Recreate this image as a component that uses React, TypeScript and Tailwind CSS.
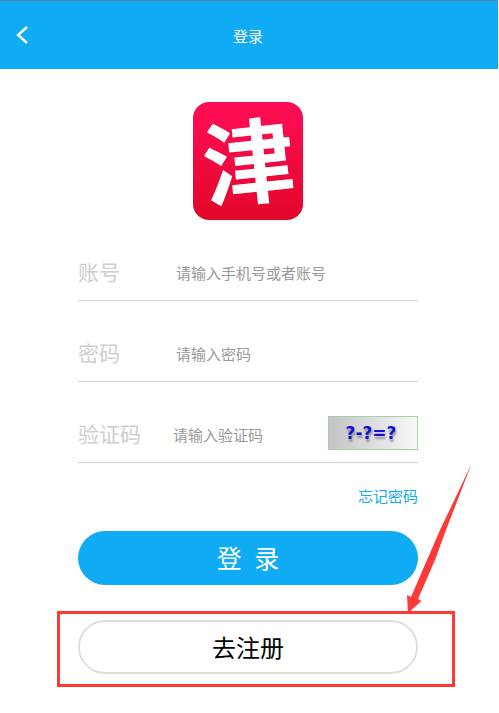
import React from 'react';

type FieldProps = {
    id: string;
    label: string;
    labelWidth: string;
    type: string;
    placeholder: string;
    children?: React.ReactNode;
}

function Field( props: FieldProps ) {

    return (
        <div className="flex items-end h-[81px] pb-3 border-b border-[#d0d0d0]">
            <label htmlFor={props.id} className={`${props.labelWidth} shrink-0 pb-px text-[21px] leading-8 text-[#cecece]`}>{props.label}</label>
            <input
                id={props.id}
                type={props.type}
                placeholder={props.placeholder}
                className="min-w-0 flex-1 h-[30px] pb-0.5 text-[15px] outline-none placeholder:text-[#999999]"
            />
            {props.children}
        </div>
    );
}

function Logo() {

    return (
        <div className="flex items-center justify-center w-[110px] h-[118px] pb-2 rounded-2xl bg-linear-to-b from-[#ff0c55] to-[#e30628]">
            <span className="-rotate-6 text-[92px] leading-[110px] font-bold text-white">津</span>
        </div>
    );
}

function Captcha() {

    return (
        <button
            type="button"
            aria-label="换一张验证码"
            className="flex items-start justify-center w-[90px] h-[34px] shrink-0 border border-[#a9cfa6] bg-linear-to-r from-[#c4c4c4] to-[#f8f8f8]"
        >
            <span className="pt-1 pr-1 font-['DejaVu_Sans',sans-serif] text-[17px] leading-6 font-bold text-[#1010d8] text-shadow-[1px_3px_2px_#66666699]">?-?=?</span>
        </button>
    );
}

function App() {

    return (
        <div className="pr-px pb-6 bg-white font-['Noto_Sans_CJK_SC',sans-serif]">
            <header className="grid grid-cols-[48px_1fr_48px] items-center h-[69px] border-t border-[#5f7f90] bg-[#10abf5] text-white">
                <button type="button" aria-label="返回" className="pl-4">
                    <svg viewBox="0 0 12 18" className="w-3 h-[18px]" fill="none" stroke="currentColor" strokeWidth="2.4">
                        <path d="M11 1 L2 9 L11 17"/>
                    </svg>
                </button>
                <h1 className="pt-0.5 pr-0.5 text-center text-[15px]">登录</h1>
            </header>

            <main className="pl-[78px] pr-20">
                <div className="flex justify-center pt-[33px]">
                    <Logo/>
                </div>

                <form onSubmit={(e) => e.preventDefault()}>
                    <Field id="account" label="账号" labelWidth="w-[98px]" type="text" placeholder="请输入手机号或者账号"/>
                    <Field id="password" label="密码" labelWidth="w-[98px]" type="password" placeholder="请输入密码"/>
                    <Field id="code" label="验证码" labelWidth="w-[95px]" type="text" placeholder="请输入验证码">
                        <Captcha/>
                    </Field>

                    <div className="flex justify-end pt-[19px]">
                        <a href="#forgot" className="text-[15px] leading-7 text-[#10abf5]">忘记密码</a>
                    </div>

                    <button type="submit" className="block w-full h-[54px] mt-[21px] rounded-full bg-[#10abf5] text-[25px] text-white">登&ensp;录</button>

                    <div className="relative mt-[35px]">
                        <button type="button" className="block w-full h-[54px] rounded-full border-2 border-[#dedede] text-2xl text-black">去注册</button>

                        {/* callout around the register button */}
                        <div className="absolute -top-[9px] -bottom-[13px] -left-[21px] -right-[37px] border-3 border-[#ff3838] pointer-events-none"></div>
                        <svg viewBox="0 0 66 150" className="absolute -right-[54px] bottom-[61px] w-[66px] h-[150px] pointer-events-none" fill="#ff3838">
                            <path d="M65.500 1 L34 67 L21 97 L5 134 L1 132 L2 150 L15.500 138 L12 136 L29 97 L40 67 Z"/>
                        </svg>
                    </div>
                </form>
            </main>
        </div>
    );
}

export default App;
